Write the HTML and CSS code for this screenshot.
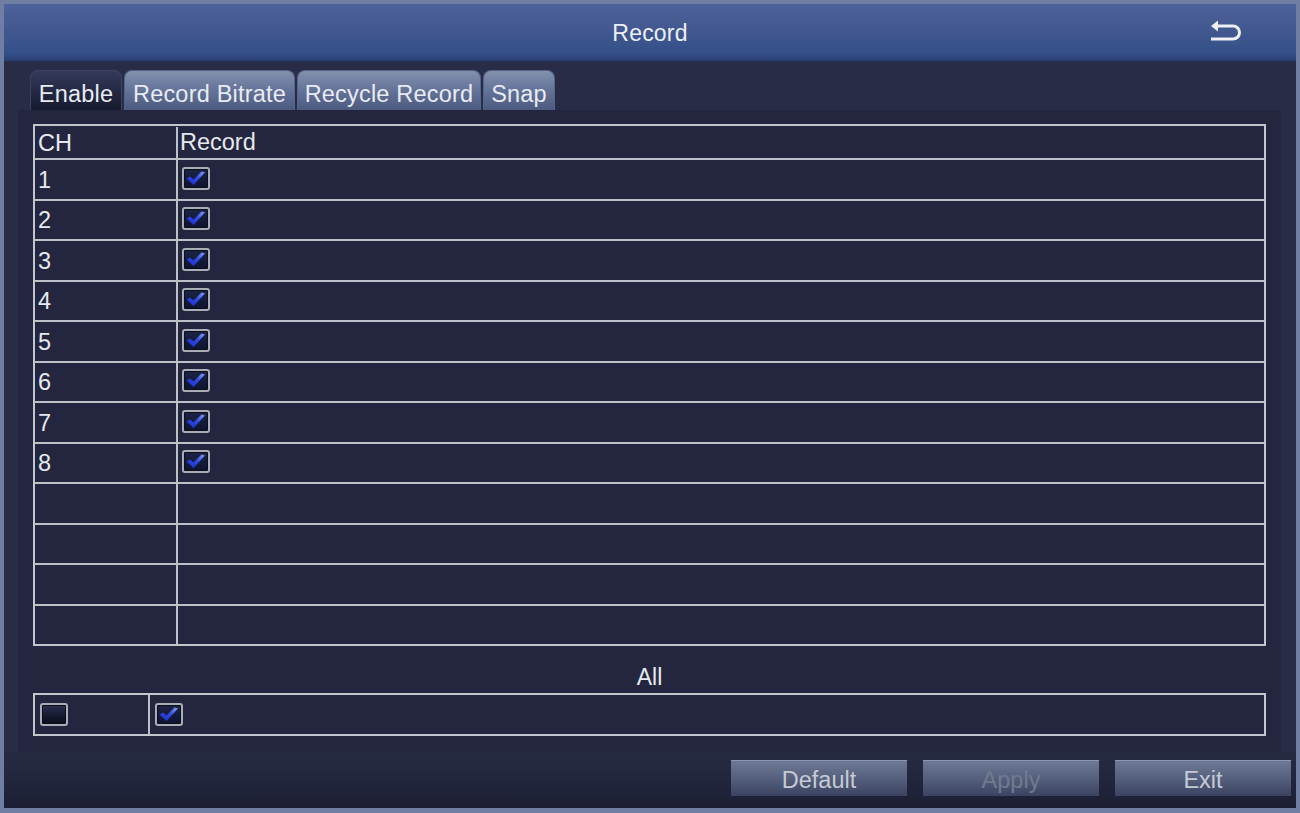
FILE: index.html
```html
<!DOCTYPE html>
<html>
<head>
<meta charset="utf-8">
<link rel="stylesheet" href="styles.css">
</head>
<body>
<div class="window">
  <div class="titlebar">
    <div></div>
    <div class="title">Record</div>
    <div class="back">
      <svg width="34" height="24" viewBox="0 0 34 24">
        <path d="M6 7 H23 A6.5 6.5 0 0 1 23 20 H1" fill="none" stroke="#eef0f6" stroke-width="3"/>
        <path d="M1 7 L8 1.5 L8 12.5 Z" fill="#eef0f6"/>
      </svg>
    </div>
  </div>
  <div class="main">
    <div class="tabs">
      <div class="tab active w1">Enable</div>
      <div class="tab w2">Record Bitrate</div>
      <div class="tab w3">Recycle Record</div>
      <div class="tab w4">Snap</div>
    </div>
    <div class="panel">
      <div class="grid">
        <div class="row head"><div class="c1">CH</div><div class="c2">Record</div></div>
        <div class="row"><div class="c1">1</div><div class="c2"><span class="cb on"></span></div></div>
        <div class="row"><div class="c1">2</div><div class="c2"><span class="cb on"></span></div></div>
        <div class="row"><div class="c1">3</div><div class="c2"><span class="cb on"></span></div></div>
        <div class="row"><div class="c1">4</div><div class="c2"><span class="cb on"></span></div></div>
        <div class="row"><div class="c1">5</div><div class="c2"><span class="cb on"></span></div></div>
        <div class="row"><div class="c1">6</div><div class="c2"><span class="cb on"></span></div></div>
        <div class="row"><div class="c1">7</div><div class="c2"><span class="cb on"></span></div></div>
        <div class="row"><div class="c1">8</div><div class="c2"><span class="cb on"></span></div></div>
        <div class="row"><div class="c1"></div><div class="c2"></div></div>
        <div class="row"><div class="c1"></div><div class="c2"></div></div>
        <div class="row"><div class="c1"></div><div class="c2"></div></div>
        <div class="row"><div class="c1"></div><div class="c2"></div></div>
      </div>
      <div class="all-label">All</div>
      <div class="all-row">
        <div class="a1"><span class="cb"></span></div>
        <div class="a2"><span class="cb on"></span></div>
      </div>
    </div>
  </div>
  <div class="footer">
    <div class="btn">Default</div>
    <div class="btn disabled">Apply</div>
    <div class="btn">Exit</div>
  </div>
</div>
</body>
</html>
```
FILE: styles.css
```css
html, body {
  margin: 0;
  padding: 0;
}
body {
  width: 1300px;
  height: 813px;
  overflow: hidden;
  font-family: "Liberation Sans", Arial, sans-serif;
  background: #1b1e30;
}
.window {
  box-sizing: border-box;
  width: 1300px;
  height: 813px;
  border-style: solid;
  border-color: #6f7ea2;
  border-width: 4px 4px 5px 4px;
  display: flex;
  flex-direction: column;
  background: #282c47;
}
.titlebar {
  height: 58px;
  flex: none;
  display: grid;
  grid-template-columns: 1fr auto 1fr;
  align-items: center;
  background: linear-gradient(#4e619b 0%, #43598f 40%, #34508a 85%, #2b4073 97%, #1f2744 100%);
}
.title {
  color: #eceff6;
  font-size: 23px;
  letter-spacing: 0.2px;
}
.back {
  justify-self: end;
  margin-right: 52px;
  height: 24px;
  margin-top: -4px;
}
.back svg { display: block; }
.main {
  padding: 8px 15px 0 14px;
  flex: none;
}
.tabs {
  display: flex;
  height: 40px;
  margin-left: 12px;
  gap: 2px;
}
.tab {
  box-sizing: border-box;
  height: 40px;
  border-radius: 8px 8px 0 0;
  font-size: 23.5px;
  letter-spacing: 0.2px;
  color: #e8ebf2;
  display: flex;
  align-items: center;
  justify-content: center;
  padding-top: 7px;
  background: linear-gradient(#8391ae 0%, #66759a 45%, #4b5a7e 100%);
  border: 1px solid #55648a;
  border-bottom: none;
}
.tab.active {
  background: linear-gradient(#33395a 0%, #242a45 50%, #161a2e 100%);
  border-color: #3b4264;
}
.w1 { width: 92px; }
.w2 { width: 171px; }
.w3 { width: 184px; }
.w4 { width: 72px; }
.panel {
  height: 642px;
  box-sizing: border-box;
  background: #23263e;
  padding: 14px 15px 16px 15px;
  display: flex;
  flex-direction: column;
}
.grid {
  box-sizing: border-box;
  width: 1233px;
  height: 522px;
  border: 2px solid #c3c6cc;
  display: flex;
  flex-direction: column;
  color: #e6e9ef;
  font-size: 23.5px;
}
.row {
  display: flex;
  flex: 1;
  border-top: 2px solid #bcc0c7;
  min-height: 0;
}
.row.head {
  flex: none;
  height: 32px;
  border-top: none;
  padding-top: 1px;
  box-sizing: border-box;
}
.c1 {
  box-sizing: border-box;
  width: 143px;
  flex: none;
  border-right: 2px solid #bcc0c7;
  padding-left: 3px;
  padding-top: 2px;
  display: flex;
  align-items: center;
}
.c2 {
  flex: 1;
  padding-left: 2px;
  display: flex;
  align-items: center;
}
.row .c2 .cb { margin-left: 2px; margin-top: -2px; }
.cb {
  box-sizing: border-box;
  display: inline-block;
  width: 28px;
  height: 23px;
  border: 2px solid #a9adb5;
  border-radius: 3px;
  background: linear-gradient(#2a3150 0%, #151a30 55%, #0b0e1c 100%);
  box-shadow: inset 0 0 0 1px #0b0d18;
}
.cb.on {
  background-color: #10183a;
  background-image:
    url("data:image/svg+xml;utf8,<svg xmlns='http://www.w3.org/2000/svg' width='24' height='19' viewBox='0 0 24 19'><defs><linearGradient id='g' x1='0' y1='1' x2='1' y2='0'><stop offset='0' stop-color='%231a2ccc'/><stop offset='0.55' stop-color='%232f4ae2'/><stop offset='1' stop-color='%238aa4f6'/></linearGradient></defs><path d='M2.5 9.5 L9.5 16 L21 3.5 L17.5 2.5 L9.5 10.5 L6 7.5 Z' fill='url(%23g)'/></svg>"),
    linear-gradient(#1c2446 0%, #0d1330 100%);
  background-repeat: no-repeat;
  background-position: center, 0 0;
}
.all-label {
  height: 47px;
  flex: none;
  box-sizing: border-box;
  padding-top: 18px;
  text-align: center;
  color: #e6e9ef;
  font-size: 23px;
  line-height: 26px;
}
.all-row {
  box-sizing: border-box;
  width: 1233px;
  height: 43px;
  border: 2px solid #c3c6cc;
  display: flex;
}
.a1 {
  box-sizing: border-box;
  width: 115px;
  border-right: 2px solid #bcc0c7;
  display: flex;
  align-items: center;
  padding-left: 5px;
}
.a2 {
  flex: 1;
  display: flex;
  align-items: center;
  padding-left: 5px;
}
.footer {
  flex: 1;
  display: flex;
  justify-content: flex-end;
  align-items: flex-start;
  gap: 16px;
  padding: 8px 5px 0 0;
  background: linear-gradient(#262a43 0%, #22263d 50%, #1c1f33 100%);
}
.btn {
  width: 176px;
  height: 36px;
  box-sizing: border-box;
  border-top: 1px solid #8c97b2;
  background: linear-gradient(#6e7995 0%, #5a6583 40%, #454f6c 80%, #3a4360 100%);
  color: #c6cad3;
  font-size: 23.5px;
  display: flex;
  align-items: center;
  justify-content: center;
  padding-top: 4px;
}
.btn.disabled {
  color: #737a8e;
}
```
